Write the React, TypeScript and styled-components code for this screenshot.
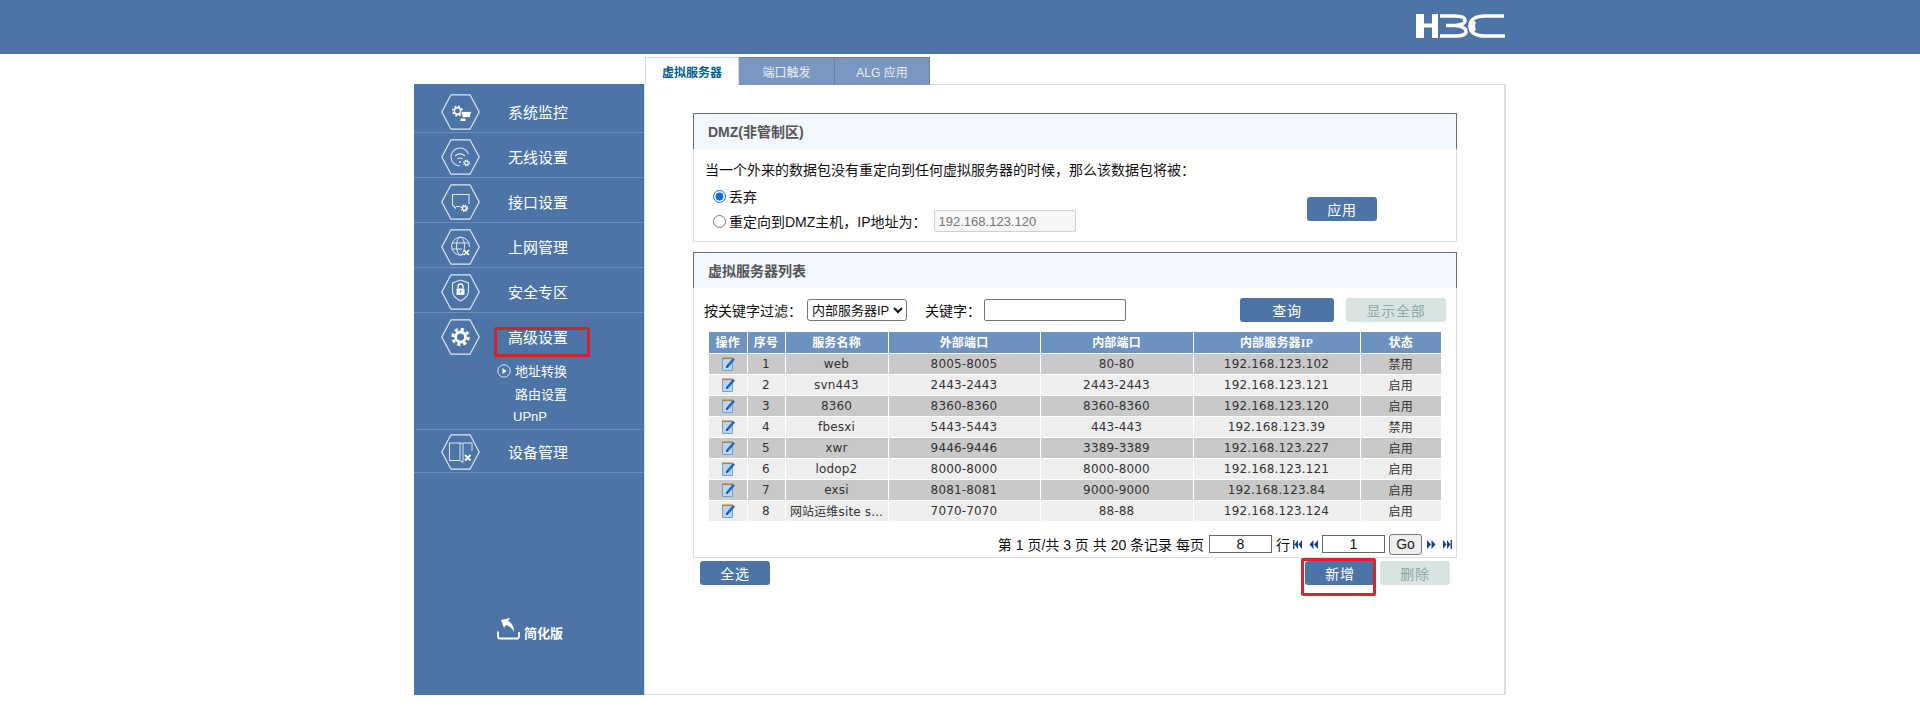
import React from "react";
import styled, { createGlobalStyle } from "styled-components";

const GlobalStyle = createGlobalStyle`
  html, body { margin: 0; padding: 0; background: #fff; }
  body { font-family: "Liberation Sans", "Noto Sans CJK SC", sans-serif; color: #111; }
  * { box-sizing: border-box; }
`;

const TopBar = styled.header`
  height: 54px;
  background: #4c74a6;
  display: flex;
  justify-content: flex-end;
  align-items: flex-start;
  padding: 14px 414px 0 0;
`;

const Shell = styled.div`
  width: 1092px;
  margin: 0 auto;
  display: flex;
  height: 641px;
`;

const Sidebar = styled.nav`
  width: 231px;
  margin-top: 30px;
  height: 611px;
  background: #4c74a6;
  border-right: 1px solid #d3deec;
  display: flex;
  flex-direction: column;
  color: #fff;
`;

const MenuRow = styled.div<{ $top: number; $bottom: number; $inset?: boolean }>`
  display: flex;
  align-items: center;
  padding: ${(p) => p.$top}px 0 ${(p) => p.$bottom}px 27px;
  box-shadow: ${(p) => (p.$inset ? "none" : "inset 0 -1px 0 #6a8dbb")};
`;

const MenuLabel = styled.span`
  position: relative;
  margin-left: 28px;
  font-size: 15px;
  line-height: 20px;
  top: 1px;
`;

const LabelHighlight = styled.span`
  position: absolute;
  left: -14px;
  top: -1px;
  width: 96px;
  height: 30px;
  border: 3px solid #d61f2e;
  border-radius: 2px;
`;

const SubMenu = styled.div`
  margin: 6px 2px 0;
  padding: 0 0 0 81px;
  height: 69px;
  border-bottom: 1px solid #6a8dbb;
  font-size: 13px;
  line-height: 22.5px;
`;

const SubItem = styled.div<{ $indent: number }>`
  display: flex;
  align-items: center;
  gap: 4px;
  padding-left: ${(p) => p.$indent}px;
  height: 22.5px;
`;

const Simplified = styled.div`
  margin-top: auto;
  margin-bottom: 52px;
  padding-left: 83px;
  display: flex;
  align-items: flex-start;
  gap: 4px;
`;

const SimplifiedText = styled.span`
  margin-top: 8px;
  font-size: 13px;
  font-weight: 700;
  line-height: 18px;
`;

const RightColumn = styled.div`
  width: 861px;
  display: flex;
  flex-direction: column;
`;

const Tabs = styled.div`
  display: flex;
  margin-top: 3px;
  height: 28px;
  margin-bottom: -1px;
`;

const Tab = styled.div<{ $active?: boolean; $width: number }>`
  position: relative;
  z-index: 1;
  width: ${(p) => p.$width}px;
  height: 28px;
  display: flex;
  align-items: center;
  justify-content: center;
  font-size: 12px;
  font-weight: ${(p) => (p.$active ? 700 : 400)};
  color: ${(p) => (p.$active ? "#005f8c" : "#e9eff7")};
  background: ${(p) => (p.$active ? "#fff" : "#7b97c1")};
  border: 1px solid ${(p) => (p.$active ? "#d3dbe6" : "#6f7f95")};
  border-left: ${(p) => (p.$active ? "1px solid #d3dbe6" : "none")};
  border-bottom: ${(p) => (p.$active ? "1px solid #fff" : "1px solid #7b97c1")};
`;

const MainPanel = styled.main`
  height: 611px;
  border: 1px solid #dcdcdc;
  border-left: none;
  border-right-width: 2px;
  padding: 28px 47px 0 48px;
`;

const Card = styled.section<{ $mb?: number }>`
  border: 1px solid #dcdcdc;
  border-top: none;
  margin-bottom: ${(p) => p.$mb ?? 0}px;
`;

const CardTitle = styled.h2`
  margin: 0 -1px;
  height: 36px;
  background: #f3f7fe;
  border: 1px solid #6d6d6d;
  border-bottom: none;
  padding-left: 14px;
  font-size: 14px;
  line-height: 37px;
  font-weight: 700;
  color: #555;
`;

const DmzBody = styled.div`
  height: 92px;
  padding: 11px 0 0 11px;
`;

const BodyLine = styled.div`
  font-size: 14px;
  line-height: 20px;
`;

const DmzOptions = styled.div`
  display: flex;
  justify-content: space-between;
  margin-top: 5px;
  padding-right: 79px;
`;

const RadioList = styled.div`
  display: flex;
  flex-direction: column;
  gap: 3px;
  padding-left: 8px;
`;

const RadioLine = styled.label`
  display: flex;
  align-items: center;
  height: 22px;
  font-size: 14px;
`;

const Radio = styled.input`
  margin: 0 3px 0 0;
  width: 13px;
  height: 13px;
  accent-color: #0b6fe0;
`;

const IpInput = styled.input`
  margin-left: 7px;
  width: 142px;
  height: 22px;
  border: 1px solid #cfcfcf;
  border-radius: 2px;
  background: #f6f6f6;
  color: #777;
  font: 13px "Liberation Sans", sans-serif;
  padding: 0 4px;
`;

const Btn = styled.button<{ $width: number; $off?: boolean }>`
  width: ${(p) => p.$width}px;
  height: 24px;
  border: none;
  border-radius: 3px;
  background: ${(p) => (p.$off ? "#d8e4e2" : "#4c74a6")};
  color: ${(p) => (p.$off ? "#8ea9a4" : "#fff")};
  font: 14px "Liberation Sans", "Noto Sans CJK SC", sans-serif;
  letter-spacing: 0.7px;
  padding: 0;
`;

const ApplyBtn = styled(Btn)`
  margin-top: 12px;
`;

const ListBody = styled.div`
  height: 269px;
  padding: 10px 10px 0;
`;

const FilterRow = styled.div`
  display: flex;
  align-items: center;
  height: 24px;
  font-size: 14px;
  margin-bottom: 10px;
`;

const FilterLabel = styled.span<{ $width: number; $ml?: number }>`
  width: ${(p) => p.$width}px;
  margin-left: ${(p) => p.$ml ?? 0}px;
`;

const FilterSelect = styled.select`
  width: 100px;
  height: 22px;
  font: 13px "Liberation Sans", "Noto Sans CJK SC", sans-serif;
  border: 1px solid #767676;
  border-radius: 3px;
  background: #fff;
  color: #111;
  padding: 0;
`;

const KeywordInput = styled.input`
  width: 142px;
  height: 22px;
  border: 1px solid #767676;
  border-radius: 2px;
`;

const FilterActions = styled.div`
  margin-left: auto;
  display: flex;
  gap: 12px;
`;

const Table = styled.table`
  width: 732px;
  margin-left: 5px;
  table-layout: fixed;
  border-collapse: collapse;
  font: 12px "DejaVu Sans", "Noto Sans CJK SC", sans-serif;
  letter-spacing: 0.15px;
  color: #333;
`;

const Th = styled.th<{ $width: number }>`
  width: ${(p) => p.$width}px;
  height: 21px;
  padding: 0;
  background: #6d92c0;
  color: #fff;
  font: 700 12px "Liberation Serif", "Noto Sans CJK SC", serif;
  border-right: 1px solid #fff;
  border-bottom: 1px solid #fff;
  &:last-child { border-right: none; }
`;

const Tr = styled.tr<{ $even: boolean }>`
  background: ${(p) => (p.$even ? "#eeeeee" : "#c9c9c9")};
`;

const Td = styled.td`
  height: 21px;
  padding: 0;
  text-align: center;
  white-space: nowrap;
  overflow: hidden;
  border-right: 1px solid #fff;
  border-bottom: 1px solid #fff;
  &:last-child { border-right: none; }
  svg { display: block; margin: 0 auto; }
`;

const Pager = styled.div`
  display: flex;
  align-items: center;
  justify-content: flex-end;
  height: 21px;
  margin: 12px -6px 0 0;
  font-size: 14px;
`;

const PagerText = styled.span<{ $ml?: number }>`
  margin-left: ${(p) => p.$ml ?? 0}px;
  white-space: pre;
`;

const PagerInput = styled.input<{ $ml: number }>`
  width: 63px;
  height: 18px;
  margin-left: ${(p) => p.$ml}px;
  border: 1px solid #666;
  text-align: center;
  font: 14px "Liberation Sans", sans-serif;
  padding: 0;
  color: #111;
`;

const GoBtn = styled.button`
  width: 33px;
  height: 21px;
  margin-left: 4px;
  border: 1px solid #777;
  border-radius: 3px;
  background: #efefef;
  font: 14px "Liberation Sans", sans-serif;
  padding: 0;
  color: #222;
`;

const PagerIcon = styled.svg<{ $ml: number }>`
  margin-left: ${(p) => p.$ml}px;
  width: 9px;
  height: 9px;
  flex: none;
`;

const ActionRow = styled.div`
  display: flex;
  justify-content: space-between;
  padding: 3px 7px 0;
`;

const ActionGroup = styled.div`
  display: flex;
  gap: 5px;
`;

const Highlighted = styled.div`
  position: relative;
`;

const ButtonHighlight = styled.span`
  position: absolute;
  left: -4px;
  top: -3px;
  width: 75px;
  height: 38px;
  border: 3px solid #e0202e;
  border-radius: 2px;
  pointer-events: none;
`;

const s = "#dfe8f3";

const Gear = ({ cx, cy, r = 2.4, w = 1.2 }: { cx: number; cy: number; r?: number; w?: number }) => {
  const outer = r + w;
  return (
    <g fill="none" stroke="#fff">
      <circle cx={cx} cy={cy} r={r} strokeWidth={w} />
      <circle cx={cx} cy={cy} r={outer} strokeWidth={w} strokeDasharray={`${outer * 0.42} ${outer * 0.365}`} />
    </g>
  );
};

const Hex = ({ children }: { children?: React.ReactNode }) => (
  <svg width="39" height="36" viewBox="0 0 39 36" style={{ flex: "none", display: "block" }}>
    <polygon points="10,0.8 29,0.8 38.2,18 29,35.2 10,35.2 0.8,18" fill="none" stroke={s} strokeWidth="1.2" />
    {children}
  </svg>
);

const IconMonitor = () => (
  <Hex>
    <Gear cx={16.5} cy={17} r={3.2} w={1.5} />
    <path d="M20 17.5h10.5l-1.5 6h-7.5z" fill="#fff" stroke="#4c74a6" strokeWidth="0.8" />
    <path d="M19.5 24.5h5v2.5h-5z" fill="#fff" />
  </Hex>
);
const IconWifi = () => (
  <Hex>
    <g fill="none" stroke={s} strokeWidth="1.1">
      <path d="M27.5 15A9 9 0 1 0 19 27" />
      <path d="M14 17a7 7 0 0 1 10 0" />
      <path d="M16.5 20a4 4 0 0 1 5 0" />
    </g>
    <circle cx="19" cy="23" r="1" fill={s} />
    <Gear cx={25.5} cy={24} r={1.8} w={1.1} />
  </Hex>
);
const IconPort = () => (
  <Hex>
    <path d="M28 20V10.5H11.5V21l3.5 3.5M15 22.5h4.5" fill="none" stroke={s} strokeWidth="1.1" />
    <Gear cx={23.5} cy={24.3} r={2} w={1.2} />
  </Hex>
);
const IconGlobe = () => (
  <Hex>
    <g fill="none" stroke={s} strokeWidth="1">
      <path d="M24 25a9 9 0 1 1 4.5-7" />
      <ellipse cx="19.5" cy="17" rx="4" ry="9" />
      <path d="M11 14h17M11 20h10" />
    </g>
    <path d="M23 21l5 5M28 21l-5 5" stroke="#fff" strokeWidth="1.6" />
  </Hex>
);
const IconShield = () => (
  <Hex>
    <path d="M19.5 6l8 3v8c0 5-4 8-8 10-4-2-8-5-8-10V9z" fill="none" stroke={s} strokeWidth="1.1" />
    <rect x="15.5" y="14.5" width="8" height="6.5" rx="1" fill="#fff" />
    <path d="M17 14.5v-2a2.5 2.5 0 0 1 5 0v2" fill="none" stroke="#fff" strokeWidth="1.3" />
    <circle cx="19.5" cy="17.5" r="1" fill="#4c74a6" />
  </Hex>
);
const IconSettings = () => (
  <Hex>
    <Gear cx={19.5} cy={18} r={5} w={2.8} />
  </Hex>
);
const IconBook = () => (
  <Hex>
    <path d="M8.5 9h10.5v17.5h-10.5zM19 26.5l3 2v-19l-3-.5M22 9h9v8" fill="none" stroke={s} strokeWidth="1" />
    <path d="M24 21l5.5 5.5M29.5 21l-5.5 5.5" stroke="#fff" strokeWidth="1.8" />
  </Hex>
);

const SubMark = () => (
  <svg width="14" height="14" viewBox="0 0 14 14" style={{ marginTop: -3, flex: "none" }}>
    <circle cx="7" cy="7" r="6.2" fill="none" stroke="#dfe8f3" strokeWidth="1" />
    <path d="M5.5 4l4 3-4 3z" fill="#fff" />
  </svg>
);

const BackIcon = () => (
  <svg width="23" height="23" viewBox="0 0 23 23" style={{ flex: "none" }}>
    <path d="M1 14.5V20a1.5 1.5 0 0 0 1.5 1.5h18A1.5 1.5 0 0 0 22 20v-5" fill="none" stroke="#fff" strokeWidth="1.8" />
    <path d="M4 3l9-2-2 3c4 2 6 6 6 11-2-4-5-6-8-7l-2 3z" fill="#fff" />
  </svg>
);

const Logo = () => (
  <svg width="92" height="24" viewBox="0 0 92 24">
    <g fill="#fff">
      <rect x="2" y="0" width="8" height="24" />
      <rect x="18" y="0" width="6" height="24" />
      <rect x="2" y="9.5" width="20" height="4" />
    </g>
    <g fill="none" stroke="#fff" strokeWidth="3.6">
      <path d="M26 2H41C48 2 51 3.5 51 6.5C51 9.5 47 11 41 11.5H32M41 11.5C48 12 52 14 52 17.5C52 21 48 22 41 22H26" />
      <path d="M90 2H71C61 2 56 6 56 12C56 18 61 22 71 22H91" />
      <path d="M60 6.5C57.5 9 57.5 15 60 17.5" strokeWidth="6" />
    </g>
  </svg>
);

const EditIcon = () => (
  <svg width="14" height="15" viewBox="0 0 14 15">
    <path d="M1.5 2.5h10v12h-10z" fill="#bcd6f2" stroke="#7aa0c8" strokeWidth="1" />
    <path d="M1 1.5h11v1.6H1z" fill="#a8834f" />
    <path d="M5 12l1-3 6-7 2 1.6-6 7z" fill="#1a66cc" />
    <path d="M5 12l.8-2.4 1.8 1.3z" fill="#0b2a66" />
  </svg>
);

const PagerGlyph = ({ kind, ml }: { kind: "first" | "prev" | "next" | "last"; ml: number }) => {
  const d = {
    first: "M0 0h1.4v9H0zM5 0v9L1.5 4.5zM9 0v9L5.5 4.5z",
    prev: "M4.5 0v9L0.5 4.5zM9 0v9L5 4.5z",
    next: "M0 0l4 4.5L0 9zM4.5 0l4 4.5-4 4.5z",
    last: "M0 0l3.5 4.5L0 9zM4 0l3.5 4.5L4 9zM7.6 0H9v9H7.6z",
  }[kind];
  return (
    <PagerIcon $ml={ml} viewBox="0 0 9 9">
      <path d={d} fill="#16409a" />
    </PagerIcon>
  );
};

const columns = [
  ["操作", 38],
  ["序号", 38],
  ["服务名称", 103],
  ["外部端口", 152],
  ["内部端口", 153],
  ["内部服务器IP", 167],
  ["状态", 81],
] as const;

const rows = [
  ["1", "web", "8005-8005", "80-80", "192.168.123.102", "禁用"],
  ["2", "svn443", "2443-2443", "2443-2443", "192.168.123.121", "启用"],
  ["3", "8360", "8360-8360", "8360-8360", "192.168.123.120", "启用"],
  ["4", "fbesxi", "5443-5443", "443-443", "192.168.123.39", "禁用"],
  ["5", "xwr", "9446-9446", "3389-3389", "192.168.123.227", "启用"],
  ["6", "lodop2", "8000-8000", "8000-8000", "192.168.123.121", "启用"],
  ["7", "exsi", "8081-8081", "9000-9000", "192.168.123.84", "启用"],
  ["8", "网站运维site s...", "7070-7070", "88-88", "192.168.123.124", "启用"],
];

export default function App() {
  return (
    <>
      <GlobalStyle />
      <TopBar>
        <Logo />
      </TopBar>
      <Shell>
        <Sidebar>
          <MenuRow $top={10} $bottom={3}>
            <IconMonitor />
            <MenuLabel>系统监控</MenuLabel>
          </MenuRow>
          <MenuRow $top={6} $bottom={3}>
            <IconWifi />
            <MenuLabel>无线设置</MenuLabel>
          </MenuRow>
          <MenuRow $top={6} $bottom={3}>
            <IconPort />
            <MenuLabel>接口设置</MenuLabel>
          </MenuRow>
          <MenuRow $top={6} $bottom={3}>
            <IconGlobe />
            <MenuLabel>上网管理</MenuLabel>
          </MenuRow>
          <MenuRow $top={6} $bottom={3}>
            <IconShield />
            <MenuLabel>安全专区</MenuLabel>
          </MenuRow>
          <MenuRow $top={6} $bottom={0} $inset>
            <IconSettings />
            <MenuLabel>
              高级设置
              <LabelHighlight />
            </MenuLabel>
          </MenuRow>
          <SubMenu>
            <SubItem $indent={0}>
              <SubMark />
              地址转换
            </SubItem>
            <SubItem $indent={18}>路由设置</SubItem>
            <SubItem $indent={16}>UPnP</SubItem>
          </SubMenu>
          <MenuRow $top={4} $bottom={3}>
            <IconBook />
            <MenuLabel>设备管理</MenuLabel>
          </MenuRow>
          <Simplified>
            <BackIcon />
            <SimplifiedText>简化版</SimplifiedText>
          </Simplified>
        </Sidebar>
        <RightColumn>
          <Tabs>
            <Tab $active $width={94}>虚拟服务器</Tab>
            <Tab $width={96}>端口触发</Tab>
            <Tab $width={95}>ALG 应用</Tab>
          </Tabs>
          <MainPanel>
            <Card $mb={10}>
              <CardTitle>DMZ(非管制区)</CardTitle>
              <DmzBody>
                <BodyLine>当一个外来的数据包没有重定向到任何虚拟服务器的时候，那么该数据包将被：</BodyLine>
                <DmzOptions>
                  <RadioList>
                    <RadioLine>
                      <Radio type="radio" name="dmz" defaultChecked />
                      丢弃
                    </RadioLine>
                    <RadioLine>
                      <Radio type="radio" name="dmz" />
                      重定向到DMZ主机，IP地址为：
                      <IpInput defaultValue="192.168.123.120" disabled />
                    </RadioLine>
                  </RadioList>
                  <ApplyBtn $width={70}>应用</ApplyBtn>
                </DmzOptions>
              </DmzBody>
            </Card>
            <Card>
              <CardTitle>虚拟服务器列表</CardTitle>
              <ListBody>
                <FilterRow>
                  <FilterLabel $width={103}>按关键字过滤：</FilterLabel>
                  <FilterSelect defaultValue="内部服务器IP">
                    <option>内部服务器IP</option>
                  </FilterSelect>
                  <FilterLabel $width={59} $ml={18}>关键字：</FilterLabel>
                  <KeywordInput />
                  <FilterActions>
                    <Btn $width={94}>查询</Btn>
                    <Btn $width={100} $off>显示全部</Btn>
                  </FilterActions>
                </FilterRow>
                <Table>
                  <thead>
                    <tr>
                      {columns.map(([label, width]) => (
                        <Th key={label} $width={width}>{label}</Th>
                      ))}
                    </tr>
                  </thead>
                  <tbody>
                    {rows.map((row, i) => (
                      <Tr key={row[0]} $even={i % 2 === 1}>
                        <Td><EditIcon /></Td>
                        {row.map((cell, j) => (
                          <Td key={j}>{cell}</Td>
                        ))}
                      </Tr>
                    ))}
                  </tbody>
                </Table>
                <Pager>
                  <PagerText>第 1 页/共 3 页 共 20 条记录 每页</PagerText>
                  <PagerInput $ml={5} defaultValue="8" />
                  <PagerText $ml={4}>行</PagerText>
                  <PagerGlyph kind="first" ml={3} />
                  <PagerGlyph kind="prev" ml={7} />
                  <PagerInput $ml={4} defaultValue="1" />
                  <GoBtn>Go</GoBtn>
                  <PagerGlyph kind="next" ml={5} />
                  <PagerGlyph kind="last" ml={7} />
                </Pager>
              </ListBody>
            </Card>
            <ActionRow>
              <Btn $width={70}>全选</Btn>
              <ActionGroup>
                <Highlighted>
                  <Btn $width={70}>新增</Btn>
                  <ButtonHighlight />
                </Highlighted>
                <Btn $width={70} $off>删除</Btn>
              </ActionGroup>
            </ActionRow>
          </MainPanel>
        </RightColumn>
      </Shell>
    </>
  );
}
